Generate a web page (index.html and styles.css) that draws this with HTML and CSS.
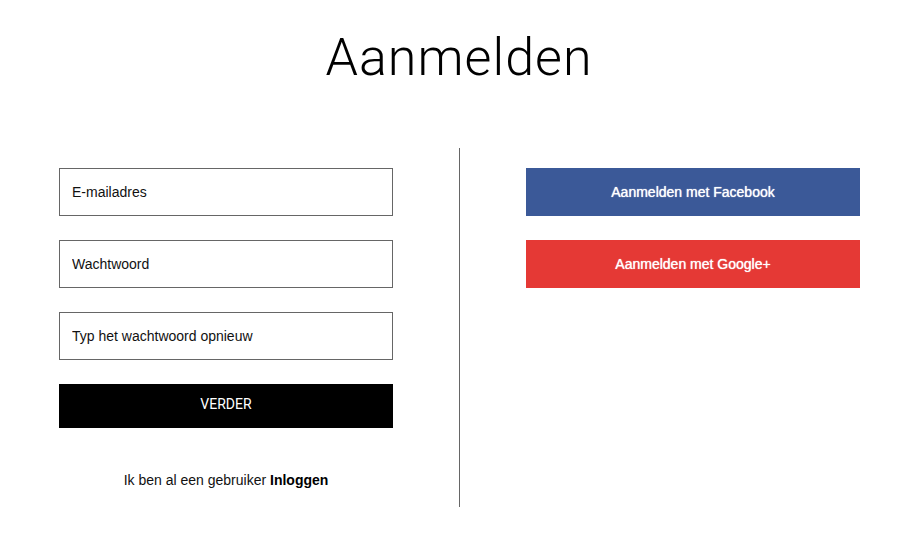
FILE: index.html
```html
<!DOCTYPE html>
<html lang="nl">
<head>
<meta charset="utf-8">
<meta name="viewport" content="width=device-width, initial-scale=1">
<title>Aanmelden</title>
<link rel="stylesheet" href="styles.css">
</head>
<body>
<main class="page">
  <h1 class="title">Aanmelden</h1>
  <div class="columns">
    <form class="column signup">
      <input class="field" type="email" placeholder="E-mailadres" aria-label="E-mailadres">
      <input class="field" type="password" placeholder="Wachtwoord" aria-label="Wachtwoord">
      <input class="field" type="password" placeholder="Typ het wachtwoord opnieuw" aria-label="Typ het wachtwoord opnieuw">
      <button class="submit" type="submit">VERDER</button>
      <p class="login">Ik ben al een gebruiker <a class="login-link" href="#">Inloggen</a></p>
    </form>
    <div class="column social">
      <button class="social-button facebook" type="button">Aanmelden met Facebook</button>
      <button class="social-button google" type="button">Aanmelden met Google+</button>
    </div>
  </div>
</main>
</body>
</html>
```

FILE: styles.css
```css
* {
  box-sizing: border-box;
}

body {
  margin: 0;
  background: #fff;
  color: #000;
  font: 14px/20px "Liberation Sans", Arial, sans-serif;
}

.title {
  margin: 0;
  padding: 26px 0 58px;
  font: 300 52px/64px Roboto, sans-serif;
  letter-spacing: 1px;
  text-align: center;
}

.columns {
  display: grid;
  grid-template-columns: 1fr 1fr;
}

.column {
  display: flex;
  flex-direction: column;
  gap: 24px;
  padding: 20px 66px 17px 59px;
}

.social {
  padding: 20px 58px 17px 66px;
  border-left: 1px solid #666;
}

.field {
  width: 100%;
  height: 48px;
  padding: 0 12px;
  border: 1px solid #666;
  border-radius: 0;
  background: #fff;
  color: #000;
  font: inherit;
}

.field::placeholder {
  color: #111;
  opacity: 1;
}

.submit {
  height: 44px;
  padding: 0 12px 4px;
  border: 0;
  background: #000;
  color: #fff;
  font: 14px/20px Roboto, sans-serif;
}

.login {
  margin: 18px 0 0;
  color: #111;
  text-align: center;
}

.login-link {
  color: #000;
  font-weight: 700;
  text-decoration: none;
}

.social-button {
  height: 48px;
  padding: 0 12px;
  border: 0;
  color: #fff;
  font: 14px/20px "Liberation Sans", Arial, sans-serif;
  text-shadow: 0 0 1px #fff;
}

.facebook {
  background: #3b5998;
}

.google {
  background: #e53935;
}
```
